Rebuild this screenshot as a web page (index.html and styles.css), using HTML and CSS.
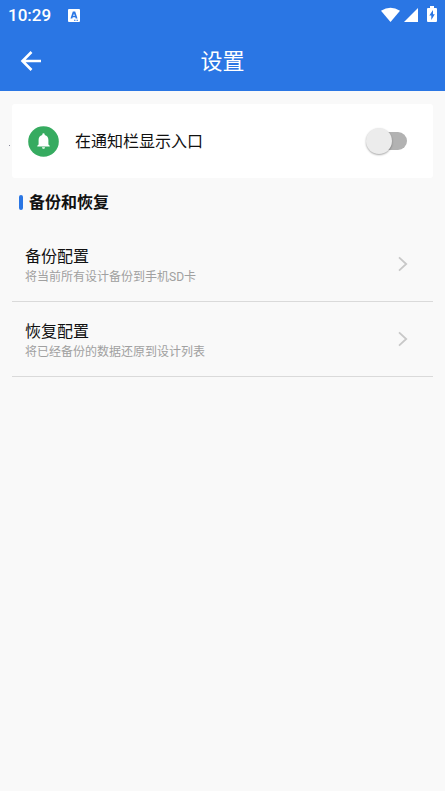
FILE: index.html
```html
<!DOCTYPE html>
<html lang="zh-CN">
<head>
<meta charset="utf-8">
<meta name="viewport" content="width=device-width, initial-scale=1">
<title>设置</title>
<link rel="stylesheet" href="styles.css">
</head>
<body>
<header class="top">
  <div class="status">
    <span class="clock">10:29</span>
    <svg class="keyboard" width="12" height="13" viewBox="0 0 12 13" aria-hidden="true">
      <path fill="#fff" fill-rule="evenodd" d="M1 0h10a1 1 0 0 1 1 1v11a1 1 0 0 1-1 1H1a1 1 0 0 1-1-1V1a1 1 0 0 1 1-1zM4.800 2.500L2.500 9.500h1.800L4.700 8.200h2.600l.4 1.300h1.800L7.200 2.500zM6 4.500L6.800 7H5.200zM6 10.700v1h1.500v-1zM8.500 10.700v1H10v-1z"/>
    </svg>
    <svg class="signals" width="58" height="18" viewBox="0 0 58 18" fill="#fff" aria-hidden="true">
      <path d="M2 4.800Q11.500-1.500 21 4.800L11.500 16z"/>
      <path d="M39 2v14H25z"/>
      <path fill-rule="evenodd" d="M51 0h4v2h2q1 0 1 1v12q0 1-1 1h-8q-1 0-1-1V3q0-1 1-1h2zM54 4L50.300 9.500h2V14l3.500-5.700H54z"/>
    </svg>
  </div>
  <div class="bar">
    <button class="back" type="button" aria-label="返回">
      <svg width="22" height="22" viewBox="0 0 22 22" fill="none" stroke="#fff" stroke-width="2.600" aria-hidden="true">
        <path d="M21 11H3M11.500 2L2.500 11l9 9"/>
      </svg>
    </button>
    <h1 class="title">设置</h1>
  </div>
</header>
<main class="content">
  <div class="card">
    <svg class="bell" width="31" height="31" viewBox="0 0 31 31" aria-hidden="true">
      <circle cx="15.500" cy="15.500" r="15.300" fill="#36ab60"/>
      <path fill="#fff" d="M14.300 8.500a1.200 1.200 0 0 1 2.400 0v.6c2.500.6 3.700 2.500 3.700 5v4.400l1.300 1.300v.7H9.300v-.7l1.300-1.300v-4.400c0-2.500 1.200-4.400 3.700-5zM14 21.200h3a1.500 1.500 0 0 1-3 0z"/>
    </svg>
    <label class="card-label" for="entry">在通知栏显示入口</label>
    <input class="switch" id="entry" type="checkbox" role="switch">
  </div>
  <h2 class="section">备份和恢复</h2>
  <button class="row" type="button">
    <span class="texts">
      <span class="name">备份配置</span>
      <span class="note">将当前所有设计备份到手机SD卡</span>
    </span>
    <svg width="10" height="16" viewBox="0 0 10 16" fill="none" stroke="#c8c8c8" stroke-width="1.800" aria-hidden="true"><path d="M1 1.300L8.200 8 1 14.700"/></svg>
  </button>
  <button class="row" type="button">
    <span class="texts">
      <span class="name">恢复配置</span>
      <span class="note">将已经备份的数据还原到设计列表</span>
    </span>
    <svg width="10" height="16" viewBox="0 0 10 16" fill="none" stroke="#c8c8c8" stroke-width="1.800" aria-hidden="true"><path d="M1 1.300L8.200 8 1 14.700"/></svg>
  </button>
</main>
</body>
</html>
```
FILE: styles.css
```css
* {
  box-sizing: border-box;
}

body {
  margin: 0;
  min-height: 100vh;
  background: #f9f9f9;
  color: #111;
  font-family: Roboto, "Noto Sans CJK SC", sans-serif;
}

button {
  margin: 0;
  padding: 0;
  border: 0;
  background: none;
  color: inherit;
  font: inherit;
}

.top {
  background: #2a76e4;
  color: #fff;
}

.status {
  display: flex;
  align-items: center;
  height: 30px;
  padding: 0 8px;
}

.clock {
  font-size: 17px;
  font-weight: 500;
  line-height: 30px;
}

.keyboard {
  margin-left: 17px;
}

.signals {
  margin-left: auto;
}

.bar {
  display: grid;
  grid-template-columns: 38px 1fr 38px;
  align-items: center;
  height: 61px;
  padding: 0 12px;
}

.back {
  display: flex;
  align-items: center;
  justify-content: center;
  height: 40px;
}

.title {
  margin: 0;
  padding-top: 2px;
  font-size: 22px;
  font-weight: 400;
  line-height: 32px;
  text-align: center;
}

.content {
  padding: 13px 12px;
}

.card {
  position: relative;
  display: flex;
  align-items: center;
  gap: 16px;
  height: 74px;
  padding: 0 26px 0 16px;
  border-radius: 3px;
  background: #fff;
}

/* Speck in the gutter beside the card */
.card::before {
  content: "";
  position: absolute;
  top: 41px;
  left: -3px;
  width: 1px;
  height: 1px;
  background: #889;
}

.card-label {
  flex: 1;
  padding-top: 2px;
  font-size: 16px;
  line-height: 24px;
}

.switch {
  appearance: none;
  position: relative;
  width: 38px;
  height: 18px;
  margin: 0;
  border-radius: 9px;
  background: #b2b2b2;
}

.switch::before {
  content: "";
  position: absolute;
  top: -4px;
  left: -3px;
  width: 26px;
  height: 26px;
  border-radius: 50%;
  background: #ececec;
  box-shadow: 0 1px 2px rgba(0, 0, 0, 0.35);
}

.switch:checked {
  background: #94baf1;
}

.switch:checked::before {
  left: 15px;
  background: #2a76e4;
}

.section {
  display: flex;
  align-items: center;
  gap: 6px;
  height: 49px;
  margin: 0;
  padding: 0 7px;
  font-size: 16px;
  font-weight: 700;
  line-height: 22px;
}

.section::before {
  content: "";
  width: 4px;
  height: 15px;
  border-radius: 2px;
  background: #2a76e4;
}

.row {
  display: flex;
  align-items: center;
  justify-content: space-between;
  width: 100%;
  height: 75px;
  padding: 0 25px 0 13px;
  border-bottom: 1px solid #dadada;
  text-align: left;
}

.texts {
  display: flex;
  flex-direction: column;
  padding-top: 4px;
}

.name {
  font-size: 16px;
  line-height: 22px;
}

.note {
  color: #a0a0a0;
  font-size: 12px;
  line-height: 18px;
}
```
